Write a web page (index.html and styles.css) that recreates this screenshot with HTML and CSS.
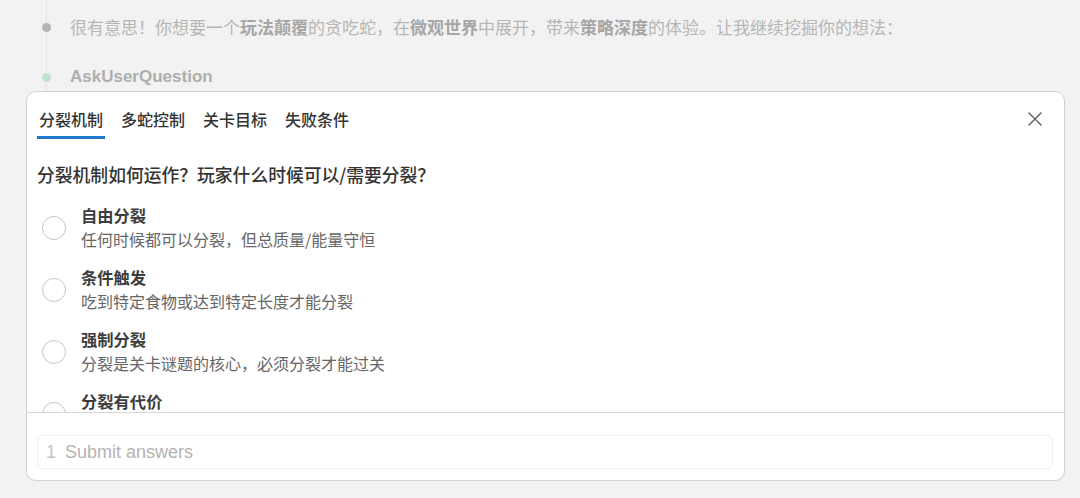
FILE: index.html
```html
<!DOCTYPE html>
<html lang="zh-CN">
<head>
<meta charset="utf-8">
<title>AskUserQuestion</title>
<link rel="stylesheet" href="styles.css">
</head>
<body>
<div class="timeline">
  <div class="tl-row">
    <span class="dot dot-gray"></span>
    <p class="tl-text">很有意思！你想要一个<b>玩法颠覆</b>的贪吃蛇，在<b>微观世界</b>中展开，带来<b>策略深度</b>的体验。让我继续挖掘你的想法：</p>
  </div>
  <div class="tl-row">
    <span class="dot dot-green"></span>
    <p class="tl-title">AskUserQuestion</p>
  </div>
</div>

<div class="card">
  <div class="card-head">
    <div class="tabs">
      <span class="tab active">分裂机制</span>
      <span class="tab">多蛇控制</span>
      <span class="tab">关卡目标</span>
      <span class="tab">失败条件</span>
    </div>
    <span class="close" aria-label="关闭">
      <svg width="14" height="14" viewBox="0 0 14 14"><path d="M1 1 L13 13 M13 1 L1 13" stroke="#6b6b6b" stroke-width="1.6" stroke-linecap="round" fill="none"/></svg>
    </span>
  </div>
  <div class="card-body">
    <p class="question">分裂机制如何运作？玩家什么时候可以/需要分裂？</p>
    <div class="options">
      <div class="option">
        <span class="radio"></span>
        <div class="opt-text">
          <div class="opt-title">自由分裂</div>
          <div class="opt-desc">任何时候都可以分裂，但总质量/能量守恒</div>
        </div>
      </div>
      <div class="option">
        <span class="radio"></span>
        <div class="opt-text">
          <div class="opt-title">条件触发</div>
          <div class="opt-desc">吃到特定食物或达到特定长度才能分裂</div>
        </div>
      </div>
      <div class="option">
        <span class="radio"></span>
        <div class="opt-text">
          <div class="opt-title">强制分裂</div>
          <div class="opt-desc">分裂是关卡谜题的核心，必须分裂才能过关</div>
        </div>
      </div>
      <div class="option">
        <span class="radio"></span>
        <div class="opt-text">
          <div class="opt-title">分裂有代价</div>
          <div class="opt-desc">每次分裂会损失部分长度或能量</div>
        </div>
      </div>
    </div>
  </div>
  <div class="card-foot">
    <div class="submit">
      <span class="num">1</span>
      <span class="submit-label">Submit answers</span>
    </div>
  </div>
</div>
</body>
</html>
```

FILE: styles.css
```css
* { box-sizing: border-box; }

html, body {
  margin: 0;
  padding: 0;
  background: #f2f2f2;
  font-family: "Liberation Sans", "Noto Sans CJK SC", sans-serif;
}

p { margin: 0; }

.timeline {
  position: relative;
  padding: 17px 0 4px 41px;
  display: flex;
  flex-direction: column;
  gap: 30px;
}
.timeline::before {
  content: "";
  position: absolute;
  left: 46px;
  top: 0;
  bottom: 0;
  width: 1px;
  background: #e3e3e3;
}

.tl-row {
  display: flex;
  align-items: center;
  gap: 19px;
  height: 20px;
  position: relative;
}

.dot {
  width: 10px;
  height: 10px;
  flex: 0 0 10px;
  display: flex;
  align-items: center;
  justify-content: center;
}
.dot::after {
  content: "";
  width: 9px;
  height: 9px;
  border-radius: 50%;
}
.dot-gray::after { background: #b4b4b4; }
.dot-green::after { background: #bfe3cf; }

.tl-text {
  font-family: "Noto Sans CJK SC", sans-serif;
  font-size: 17px;
  line-height: 20px;
  color: #b6b6b6;
  white-space: nowrap;
}
.tl-text b {
  font-weight: 700;
  color: #a6a6a6;
}

.tl-title {
  font-size: 17px;
  line-height: 20px;
  font-weight: 700;
  color: #aeaeae;
}

.card {
  margin: 0 15px 0 26px;
  height: 390px;
  background: #fff;
  border: 1px solid #d3d3d3;
  border-radius: 10px;
  display: flex;
  flex-direction: column;
  overflow: hidden;
  box-shadow: 0 1px 2px rgba(0,0,0,0.04);
}

.card-head {
  display: flex;
  justify-content: space-between;
  align-items: flex-start;
  padding: 0 22px 0 10px;
  flex: 0 0 auto;
}

.tabs {
  display: flex;
  gap: 14px;
  padding-top: 16px;
}

.tab {
  font-family: "Noto Sans CJK SC", sans-serif;
  font-size: 16px;
  line-height: 22px;
  height: 31px;
  font-weight: 500;
  color: #333;
  padding: 0 2px 6px;
  border-bottom: 3px solid transparent;
}
.tab.active {
  border-bottom-color: #1e77c8;
}

.close {
  margin-top: 20px;
  width: 14px;
  height: 14px;
  display: flex;
}

.card-body {
  flex: 1 1 auto;
  overflow: hidden;
  padding: 0 10px;
}

.question {
  margin-top: 23px;
  font-family: "Noto Sans CJK SC", sans-serif;
  font-size: 17.8px;
  line-height: 24px;
  height: 24px;
  font-weight: 500;
  color: #333;
}

.options {
  margin-top: 17px;
  display: flex;
  flex-direction: column;
  gap: 13px;
}

.option {
  display: flex;
  align-items: center;
  gap: 15px;
  padding-left: 5px;
}

.radio {
  width: 24px;
  height: 24px;
  flex: 0 0 24px;
  border: 1.5px solid #c6c6c6;
  border-radius: 50%;
  background: #fff;
}

.opt-text {
  display: flex;
  flex-direction: column;
}

.opt-title {
  font-family: "Noto Sans CJK SC", sans-serif;
  font-size: 16.3px;
  line-height: 24px;
  height: 24px;
  font-weight: 700;
  color: #3d3d3d;
}

.opt-desc {
  font-family: "Noto Sans CJK SC", sans-serif;
  font-size: 16px;
  line-height: 25px;
  height: 25px;
  color: #666;
}

.card-foot {
  flex: 0 0 auto;
  border-top: 1px solid #d6d6d6;
  padding: 22px 11px 11px 10px;
}

.submit {
  height: 34px;
  border: 1px solid #f0f0f0;
  border-radius: 6px;
  display: flex;
  align-items: center;
  padding-left: 8px;
  gap: 9px;
  font-size: 18px;
  color: #b3b3b3;
}
.submit .num { color: #c4c4c4; }
```
